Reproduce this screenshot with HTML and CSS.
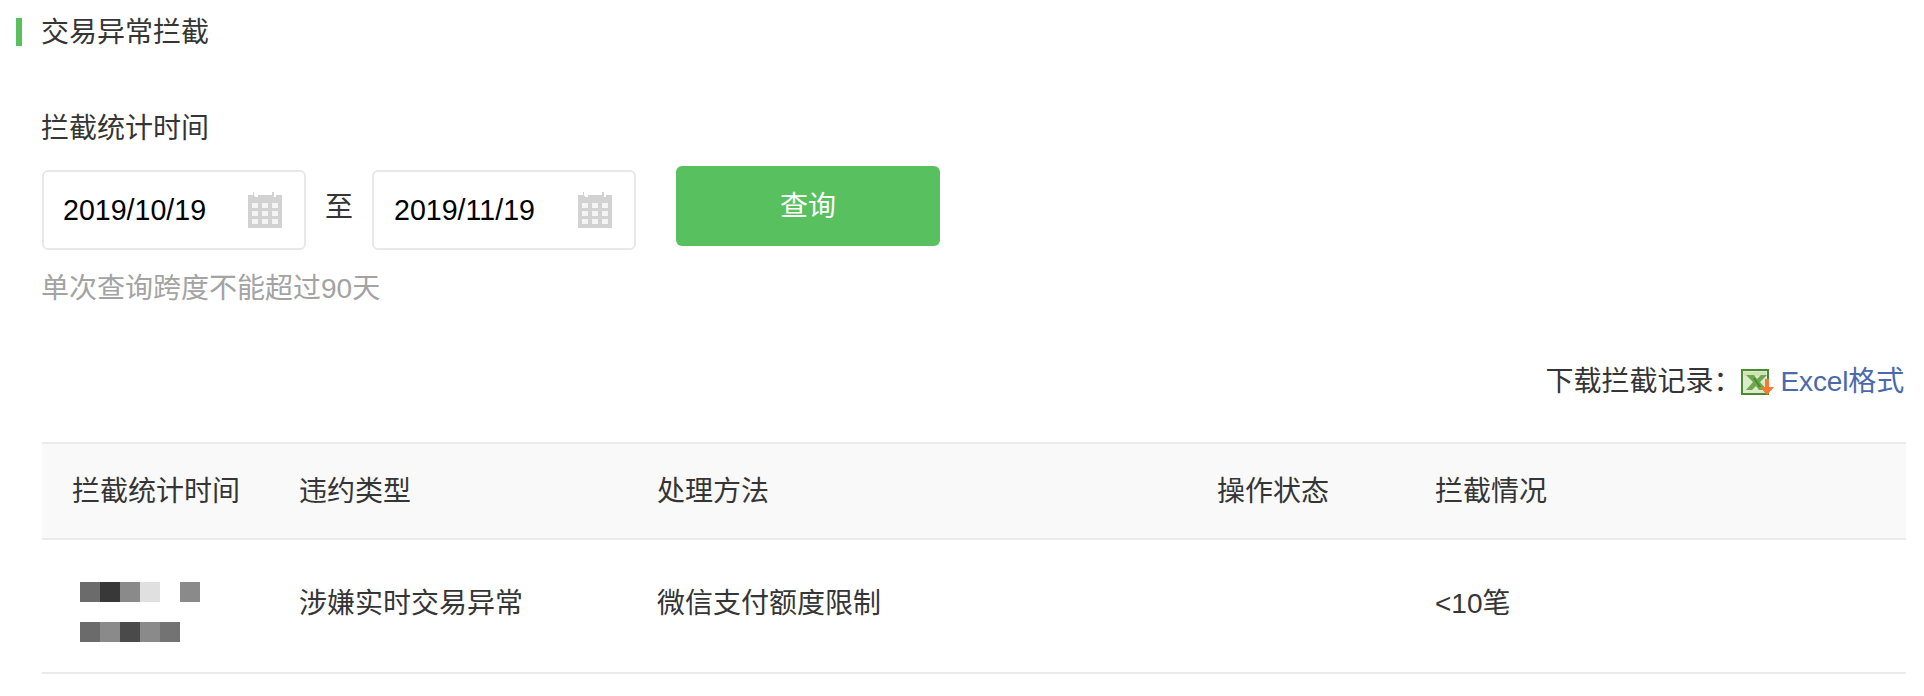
FILE: index.html
```html
<!DOCTYPE html>
<html lang="zh-CN">
<head>
    <meta charset="UTF-8">
    <title>交易异常拦截</title>
    <link rel="stylesheet" href="styles.css">
</head>
<body>
    <div class="title-row">
        <span class="title-mark"></span>
        <span class="title-text">交易异常拦截</span>
    </div>

    <div class="query-box">
        <div class="query-label">拦截统计时间</div>
        <div class="query-row">
            <div class="date-input">
                <span class="date-value">2019/10/19</span>
                <svg class="cal-icon" viewBox="0 0 34 36" width="34" height="36">
                    <path fill="#d2d2d2" d="M0 3h5V0h2v5h3V3h14V0h-1 3v5h2V3h6v33H0z"/>
                    <path fill="#fff" d="M6 0h1v4H6zM26 0h1v4h-1z"/>
                    <path fill="#f4f4f4" d="M4 11h6v5H4zM14 11h6v5h-6zM24 11h6v5h-6zM4 19h6v5H4zM14 19h6v5h-6zM24 19h6v5h-6zM4 27h6v5H4zM14 27h6v5h-6zM24 27h6v5h-6z"/>
                </svg>
            </div>
            <span class="date-sep">至</span>
            <div class="date-input">
                <span class="date-value">2019/11/19</span>
                <svg class="cal-icon" viewBox="0 0 34 36" width="34" height="36">
                    <path fill="#d2d2d2" d="M0 3h5V0h2v5h3V3h14V0h-1 3v5h2V3h6v33H0z"/>
                    <path fill="#fff" d="M6 0h1v4H6zM26 0h1v4h-1z"/>
                    <path fill="#f4f4f4" d="M4 11h6v5H4zM14 11h6v5h-6zM24 11h6v5h-6zM4 19h6v5H4zM14 19h6v5h-6zM24 19h6v5h-6zM4 27h6v5H4zM14 27h6v5h-6zM24 27h6v5h-6z"/>
                </svg>
            </div>
            <button class="query-btn" type="button">查询</button>
        </div>
        <div class="query-hint">单次查询跨度不能超过90天</div>
    </div>

    <div class="download-row">
        <span class="download-label">下载拦截记录：</span>
        <svg class="excel-icon" viewBox="0 0 34 26" width="34" height="26">
            <rect x="1" y="1" width="26" height="24" fill="#dcebcd" stroke="#4c8a2f" stroke-width="2"/>
            <path fill="#cfe3b8" d="M3 3h22v4H3z"/>
            <path fill="#6fa84a" d="M5 6h8l3 4 4-4h6l-7 7 7 8h-8l-3-4-4 4H5l7-8z"/>
            <path fill="#3f8a2e" d="M12 9h2l6 9h-2z"/>
            <path fill="#f47a30" d="M24 10h4v8h5l-7 8-7-8h5z"/>
        </svg>
        <a class="excel-link" href="#">Excel格式</a>
    </div>

    <table class="record-table">
        <colgroup>
            <col class="col-time">
            <col class="col-type">
            <col class="col-method">
            <col class="col-status">
            <col>
        </colgroup>
        <thead>
            <tr>
                <th>拦截统计时间</th>
                <th>违约类型</th>
                <th>处理方法</th>
                <th>操作状态</th>
                <th>拦截情况</th>
            </tr>
        </thead>
        <tbody>
            <tr>
                <td>
                    <div class="mosaic">
                        <span class="m1"></span><span class="m2"></span><span class="m3"></span><span class="m4"></span><span class="m0"></span><span class="m3"></span>
                    </div>
                    <div class="mosaic">
                        <span class="m1"></span><span class="m3"></span><span class="m5"></span><span class="m3"></span><span class="m6"></span>
                    </div>
                </td>
                <td>涉嫌实时交易异常</td>
                <td>微信支付额度限制</td>
                <td></td>
                <td>&lt;10笔</td>
            </tr>
        </tbody>
    </table>
</body>
</html>
```

FILE: styles.css
```css
body {
    font-family: "Liberation Sans", "Noto Sans CJK SC", sans-serif;
    font-size: 28px;
    color: #353535;
    margin: 0;
    padding: 0 18px 0 16px;
    background-color: #fff;
}
.title-row {
    display: flex;
    align-items: center;
    height: 28px;
    padding-top: 18px;
}
.title-mark {
    width: 6px;
    height: 28px;
    margin-right: 19px;
    background-color: #59c060;
}
.title-text {
    padding-top: 2px;
    line-height: 28px;
}
.query-box {
    margin-top: 63px;
    padding-left: 26px;
}
.query-label {
    margin-left: -1px;
    line-height: 40px;
}
.query-row {
    display: flex;
    align-items: center;
    margin-top: 13px;
}
.date-input {
    display: flex;
    align-items: center;
    justify-content: space-between;
    box-sizing: border-box;
    width: 264px;
    height: 80px;
    padding: 0 22px 0 19px;
    margin-top: 8px;
    border: 2px solid #e8e8e8;
    border-radius: 6px;
}
.date-value {
    font-size: 28.6px;
    color: #000;
}
.date-input + .date-sep + .date-input .date-value {
    margin-left: 1px;
}
.date-sep {
    width: 66px;
    text-align: center;
    margin-bottom: 3px;
}
.query-btn {
    width: 264px;
    height: 80px;
    margin-left: 40px;
    padding: 0 0 4px;
    border: none;
    border-radius: 6px;
    color: #fff;
    font-family: inherit;
    font-size: 28px;
    background-color: #59c060;
}
.query-hint {
    margin: 19px 0 0 -1px;
    line-height: 40px;
    color: #a3a3a3;
}
.download-row {
    display: flex;
    align-items: center;
    justify-content: flex-end;
    margin-top: 53px;
    line-height: 40px;
    padding-right: 2px;
}
.download-label {
    margin-right: -1px;
}
.excel-icon {
    margin: 0 6px 0 0;
}
.excel-link {
    letter-spacing: -0.15px;
    color: #4a69ad;
    text-decoration: none;
}
.record-table {
    width: 1864px;
    margin: 40px 0 0 26px;
    border-collapse: collapse;
    table-layout: fixed;
    font-size: 28px;
}
.col-time { width: 227px; }
.col-type { width: 358px; }
.col-method { width: 560px; }
.col-status { width: 218px; }
.record-table th {
    height: 90px;
    padding: 0 0 4px 30px;
    text-align: left;
    font-weight: normal;
    background-color: #f9f9f9;
    border-top: 2px solid #ebebeb;
    border-bottom: 2px solid #ebebeb;
}
.record-table td {
    height: 88px;
    padding: 44px 0 0 30px;
    line-height: 40px;
    vertical-align: top;
    border-bottom: 2px solid #ebebeb;
}
.mosaic {
    display: flex;
    margin: -2px 0 0 8px;
}
.mosaic + .mosaic {
    margin-top: 20px;
}
.mosaic span {
    width: 20px;
    height: 20px;
}
.m0 { background-color: #fff; }
.m1 { background-color: #6b6b6b; }
.m2 { background-color: #383838; }
.m3 { background-color: #8a8a8a; }
.m4 { background-color: #e0e0e0; }
.m5 { background-color: #4a4a4a; }
.m6 { background-color: #737373; }
```
